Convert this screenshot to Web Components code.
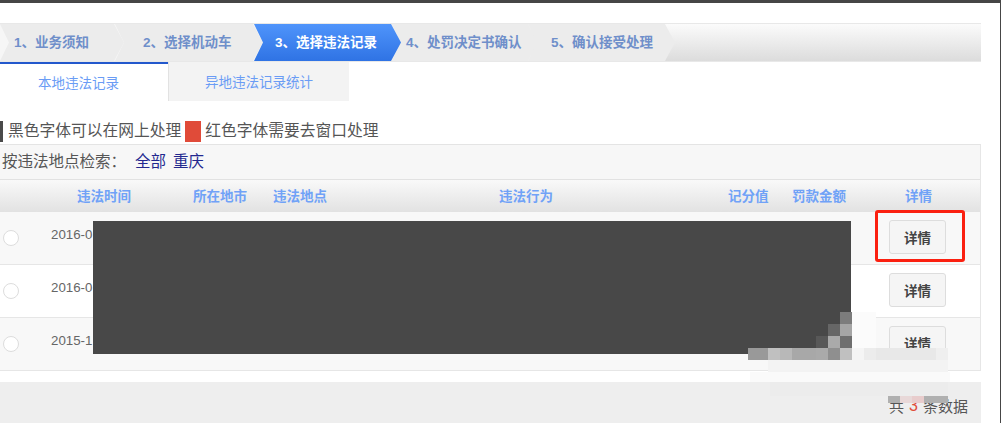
<!DOCTYPE html>
<html>
<head>
<meta charset="utf-8">
<style>
html, body { margin: 0; padding: 0; background: #fff; }
body { width: 1001px; height: 423px; overflow: hidden; position: relative; font-family: "Liberation Sans", "Noto Sans CJK SC", sans-serif; }
</style>
</head>
<body>
<violation-page></violation-page>

<script>
const FONT = '"Liberation Sans", "Noto Sans CJK SC", sans-serif';

class StepBar extends HTMLElement {
    constructor() {
        super();
        const steps = [
            ["1、业务须知", 0, 124, 14],
            ["2、选择机动车", 115, 263, 28],
            ["3、选择违法记录", 254, 401, 21],
            ["4、处罚决定书确认", 391, 538, 15],
            ["5、确认接受处理", 528, 675, 23]
        ];
        let html = '<div class="back"></div>';
        steps.forEach((s, i) => {
            html += `<span class="step${i == 2 ? " on" : ""}" style="left:${s[1]}px;width:${s[2] - s[1]}px;padding-left:${s[3]}px">${s[0]}</span>`;
        });
        this.attachShadow({mode: 'open'}).innerHTML = `
<style>
:host { display: block; width: 981px; height: 39px; box-sizing: border-box; border: 1px solid #e8e8e8; border-width: 1px 0; position: relative; background: linear-gradient(#fbfbfb, #dcdcdc); font: bold 13.5px ${FONT}; }
.back { position: absolute; left: 0; top: 0; width: 560px; height: 37px; background: #f6f6f6; }
.step { position: absolute; top: 0; height: 37px; line-height: 38px; box-sizing: border-box; color: #6f8fca; background: #ececec; clip-path: polygon(0 0, calc(100% - 10px) 0, 100% 50%, calc(100% - 10px) 100%, 0 100%, 9px 50%); white-space: nowrap; }
.step:nth-child(2) { clip-path: polygon(0 0, calc(100% - 10px) 0, 100% 50%, calc(100% - 10px) 100%, 0 100%); }
.on { background: linear-gradient(#4f94fb, #2f73e4); color: #fff; z-index: 2; }
</style>${html}`;
    }
}

class TabStrip extends HTMLElement {
    constructor() {
        super();
        this.attachShadow({mode: 'open'}).innerHTML = `
<style>
:host { display: flex; height: 39px; font: 13.5px ${FONT}; color: #6a9cf5; }
div { display: flex; align-items: center; justify-content: center; box-sizing: border-box; padding-bottom: 2px; }
.a { width: 168px; border-top: 2px solid #2358cc; padding-right: 11px; }
.b { width: 181px; background: #f3f3f3; border-left: 1px solid #e2e2e2; }
</style>
<div class="a">本地违法记录</div><div class="b">异地违法记录统计</div>`;
    }
}

class LegendLine extends HTMLElement {
    constructor() {
        super();
        this.attachShadow({mode: 'open'}).innerHTML = `
<style>
:host { display: flex; align-items: center; height: 22px; margin-top: 19px; font: 15.75px/22px ${FONT}; color: #555; }
i { display: block; height: 21px; }
.k { width: 3px; background: #4a4a4a; margin-right: 5px; }
.r { width: 16px; background: #e04b39; margin: 0 4px 0 4px; }
</style>
<i class="k"></i>黑色字体可以在网上处理<i class="r"></i>红色字体需要去窗口处理`;
    }
}

class FilterLine extends HTMLElement {
    constructor() {
        super();
        this.attachShadow({mode: 'open'}).innerHTML = `
<style>
:host { display: flex; align-items: center; height: 35px; margin-top: 2px; box-sizing: border-box; width: 981px; background: #f7f7f7; border-top: 1px solid #e4e4e4; border-right: 1px solid #e6e6e6; padding: 0 0 5px 2px; font: 15.5px ${FONT}; color: #555; }
a { color: #23288f; margin-right: 7px; }
span { width: 9px; }
</style>
按违法地点检索：<span></span><a>全部</a><a>重庆</a>`;
    }
}

class RecordRow extends HTMLElement {
    constructor() {
        super();
        const alt = this.hasAttribute("alt");
        this.attachShadow({mode: 'open'}).innerHTML = `
<style>
:host { display: flex; align-items: center; height: 53px; box-sizing: border-box; border-bottom: 1px solid #e6e6e6; background: ${alt ? "#f8f8f8" : "#fff"}; font: 13.3px ${FONT}; color: #666; position: relative; }
.radio { width: 16px; height: 16px; box-sizing: border-box; border: 1px solid #ddd; border-radius: 50%; background: #fff; margin: 0 0 0 3px; }
.date { margin: 0 0 8px 32px; flex: 1; }
button { width: 57px; height: 34px; margin: 0 34px 3px 0; padding: 0; border: 1px solid #ddd; border-radius: 3px; background: #f5f5f5; color: #444; font: bold 13.5px ${FONT}; }
</style>
<span class="radio"></span><span class="date"><slot></slot></span><button>详情</button>`;
    }
}

class RecordTable extends HTMLElement {
    constructor() {
        super();
        const cols = [["违法时间", 77], ["所在地市", 193], ["违法地点", 273], ["违法行为", 499], ["记分值", 728], ["罚款金额", 792], ["详情", 905]];
        const heads = cols.map((c, i) => {
            const prev = i ? cols[i - 1][1] : 0;
            const prevW = i ? cols[i - 1][0].length * 13.5 : 0;
            return `<span style="margin-left:${c[1] - prev - prevW}px;width:${c[0].length * 13.5}px">${c[0]}</span>`;
        }).join("");
        this.attachShadow({mode: 'open'}).innerHTML = `
<style>
:host { display: block; width: 981px; box-sizing: border-box; border-right: 1px solid #e6e6e6; }
.head { display: flex; align-items: center; height: 33px; box-sizing: border-box; border-top: 1px solid #e2e2e2; background: linear-gradient(#f9f9f9, #e2e2e2); font: bold 13.5px ${FONT}; color: #70a2f7; padding-bottom: 3px; }
.head span { white-space: nowrap; flex: none; }
</style>
<div class="head">${heads}</div><slot></slot>`;
    }
}

class PageFooter extends HTMLElement {
    constructor() {
        super();
        this.attachShadow({mode: 'open'}).innerHTML = `
<style>
:host { display: flex; justify-content: flex-end; align-items: center; width: 981px; height: 41px; margin-top: 11px; box-sizing: border-box; background: #eee; padding: 6px 13px 0 0; font: 15px ${FONT}; color: #555; }
b { color: #e04b39; font-weight: normal; font-size: 16px; margin: 0 5px; }
</style>
共<b>3</b>条数据`;
    }
}

class MosaicMark extends HTMLElement {
    constructor() {
        super();
        // pale smear first, then the 12px mosaic cells left over from the watermark
        const cells = [
            [852, 312, 24, 36, "#fbfbfb"],
            [768, 360, 180, 12, "#f3f3f3"],
            [750, 372, 200, 10, "#fafafa"],
            [770, 382, 178, 14, "#ececec"],
            [840, 312, 12, 12, "#7c7c7c"],
            [828, 324, 12, 12, "#666"], [840, 324, 12, 12, "#a5a5a5"],
            [816, 336, 12, 12, "#585858"], [828, 336, 12, 12, "#aaa"], [840, 336, 12, 12, "#6e6e6e"],
            [748, 348, 20, 12, "#999"], [768, 348, 12, 12, "#c0c0c0"], [780, 348, 12, 12, "#b8b8b8"],
            [792, 348, 24, 12, "#a8a8a8"], [816, 348, 12, 12, "#aaa"], [828, 348, 12, 12, "#8f8f8f"], [840, 348, 12, 12, "#c0c0c0"],
            [852, 348, 12, 12, "#f5f5f5"], [864, 348, 12, 12, "#ececec"], [876, 348, 60, 12, "#e8e8e8"], [936, 348, 12, 12, "#efefef"],
            [888, 396, 12, 7, "#b0b0b0"], [900, 396, 12, 7, "#e8d8d8"], [912, 396, 12, 7, "#e8cccc"], [924, 396, 24, 7, "#b0b0b0"]
        ];
        const html = cells.map(c => `<i style="left:${c[0]}px;top:${c[1]}px;width:${c[2]}px;height:${c[3]}px;background:${c[4]}"></i>`).join("");
        this.attachShadow({mode: 'open'}).innerHTML = `
<style>
:host { position: absolute; inset: 0; pointer-events: none; }
i { position: absolute; display: block; }
</style>${html}`;
    }
}

class ViolationPage extends HTMLElement {
    constructor() {
        super();
        this.attachShadow({mode: 'open'}).innerHTML = `
<style>
:host { display: block; width: 1001px; height: 423px; position: relative; overflow: hidden; }
.top { height: 3px; background: #464646; margin-bottom: 20px; }
.edge { position: absolute; right: 0; top: 0; bottom: 0; width: 1px; background: #464646; }
.mask { position: absolute; left: 93px; top: 221px; width: 758px; height: 133px; background: #484848; }
.mark { position: absolute; left: 875px; top: 210px; width: 90px; height: 52px; box-sizing: border-box; border: 3px solid #fb2010; border-radius: 3px; }
</style>
<div class="top"></div>
<step-bar></step-bar>
<tab-strip></tab-strip>
<legend-line></legend-line>
<filter-line></filter-line>
<record-table>
  <record-row alt>2016-0</record-row>
  <record-row>2016-0</record-row>
  <record-row alt>2015-1</record-row>
</record-table>
<page-footer></page-footer>
<div class="edge"></div>
<div class="mask"></div>
<div class="mark"></div>
<mosaic-mark></mosaic-mark>`;
    }
}

customElements.define("step-bar", StepBar);
customElements.define("tab-strip", TabStrip);
customElements.define("legend-line", LegendLine);
customElements.define("filter-line", FilterLine);
customElements.define("record-row", RecordRow);
customElements.define("record-table", RecordTable);
customElements.define("page-footer", PageFooter);
customElements.define("mosaic-mark", MosaicMark);
customElements.define("violation-page", ViolationPage);
</script>
</body>
</html>
